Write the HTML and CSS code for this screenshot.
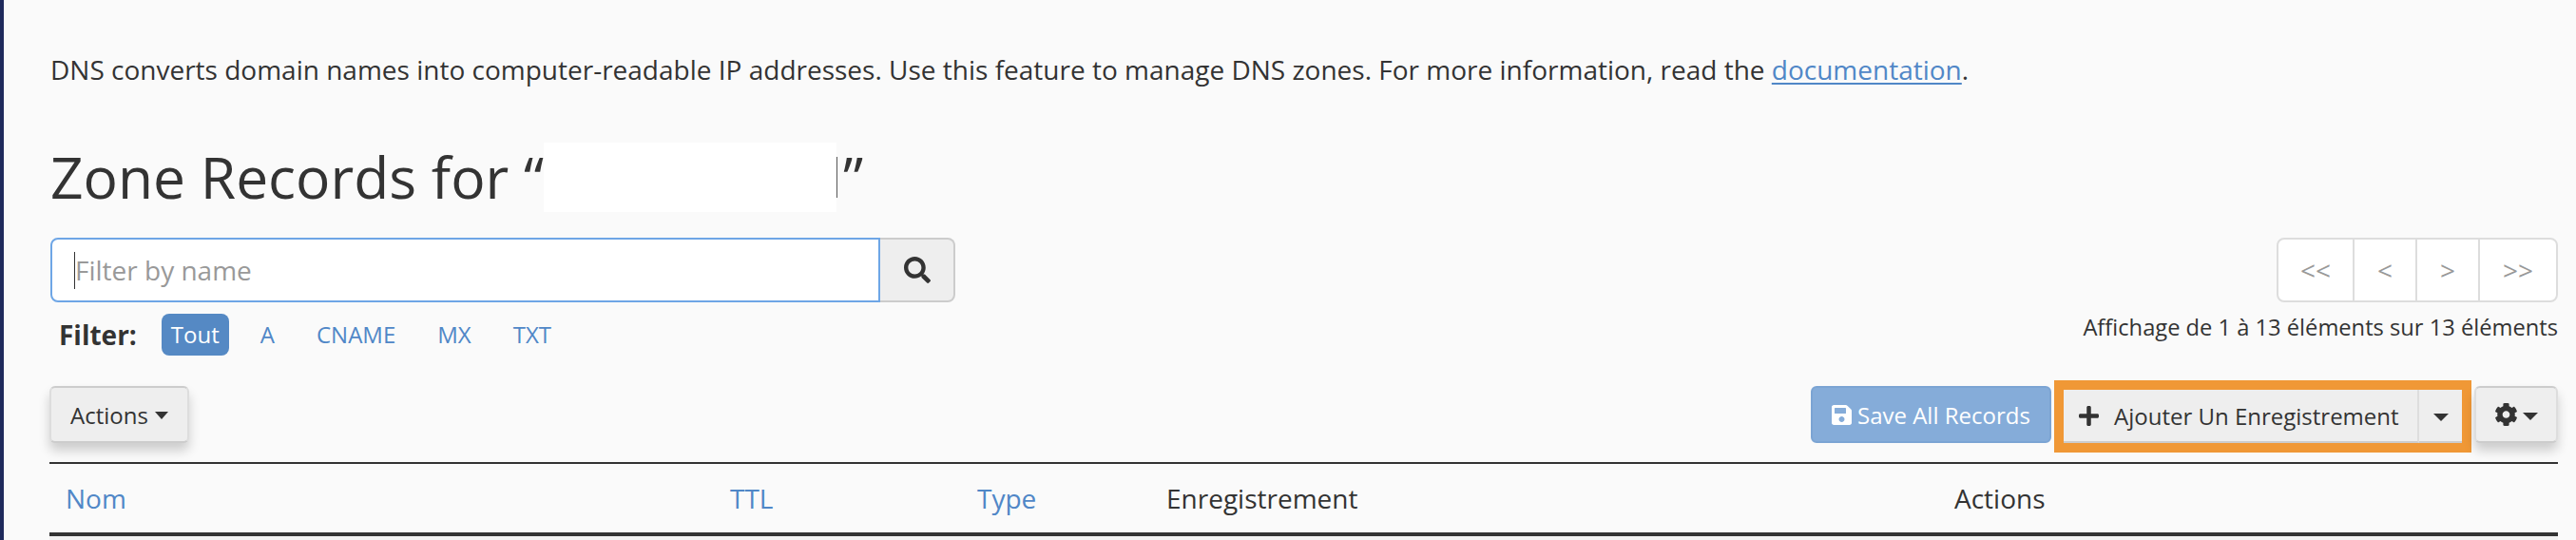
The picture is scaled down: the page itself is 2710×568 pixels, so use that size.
FILE: index.html
```html
<!DOCTYPE html>
<html lang="fr">
<head>
<meta charset="utf-8">
<title>Zone Records</title>
<link rel="stylesheet" href="styles.css">
</head>
<body>
<main class="page">
  <p class="intro">DNS converts domain names into computer-readable IP addresses. Use this feature to manage DNS zones. For more information, read the <a href="#">documentation</a>.</p>
  <h1 class="title">Zone Records for “<span class="redact"></span>”</h1>
  <div class="filters">
    <div class="filter-left">
      <div class="search">
        <div class="search-input"><span class="caret-line"></span><span class="placeholder">Filter by name</span></div>
        <button class="search-btn" type="button"><svg class="i-search" viewBox="0 0 512 512"><path fill="currentColor" d="M505 442.700L405.300 343c-4.500-4.500-10.600-7-17-7H372c27.600-35.300 44-79.700 44-128C416 93.100 322.900 0 208 0S0 93.100 0 208s93.100 208 208 208c48.300 0 92.700-16.400 128-44v16.300c0 6.400 2.500 12.500 7 17l99.700 99.700c9.400 9.400 24.600 9.400 33.900 0l28.300-28.300c9.400-9.400 9.400-24.600.1-34zM208 336c-70.700 0-128-57.200-128-128 0-70.700 57.200-128 128-128 70.700 0 128 57.200 128 128 0 70.700-57.200 128-128 128z"/></svg></button>
      </div>
      <div class="chips">
        <strong class="chips-label">Filter:</strong>
        <a class="chip active" href="#">Tout</a>
        <a class="chip" href="#">A</a>
        <a class="chip" href="#">CNAME</a>
        <a class="chip" href="#">MX</a>
        <a class="chip" href="#">TXT</a>
      </div>
    </div>
    <div class="filter-right">
      <div class="pager">
        <span class="pg pg-wide">&lt;&lt;</span><span class="pg">&lt;</span><span class="pg">&gt;</span><span class="pg pg-last">&gt;&gt;</span>
      </div>
      <div class="count">Affichage de 1 à 13 éléments sur 13 éléments</div>
    </div>
  </div>
  <div class="toolbar">
    <button class="btn btn-actions btn-shadow" type="button">Actions<span class="tri"></span></button>
    <div class="toolbar-right">
      <button class="btn btn-save" type="button"><svg class="i-save" viewBox="0 32 448 448"><path fill="currentColor" d="M433.941 129.941l-83.882-83.882A48 48 0 0 0 316.118 32H48C21.490 32 0 53.490 0 80v352c0 26.510 21.490 48 48 48h352c26.510 0 48-21.490 48-48V163.882a48 48 0 0 0-14.059-33.941zM224 416c-35.346 0-64-28.654-64-64 0-35.346 28.654-64 64-64s64 28.654 64 64c0 35.346-28.654 64-64 64zm96-304.520V212c0 6.627-5.373 12-12 12H76c-6.627 0-12-5.373-12-12V108c0-6.627 5.373-12 12-12h228.520c3.183 0 6.235 1.264 8.485 3.515l3.480 3.480A11.996 11.996 0 0 1 320 111.480z"/></svg>Save All Records</button>
      <div class="highlight">
        <button class="btn-add" type="button"><svg class="i-plus" viewBox="0 32 448 448"><path fill="currentColor" d="M416 208H272V64c0-17.670-14.330-32-32-32h-32c-17.670 0-32 14.330-32 32v144H32c-17.670 0-32 14.330-32 32v32c0 17.670 14.330 32 32 32h144v144c0 17.670 14.330 32 32 32h32c17.670 0 32-14.330 32-32V304h144c17.670 0 32-14.330 32-32v-32c0-17.670-14.330-32-32-32z"/></svg>Ajouter Un Enregistrement</button>
        <button class="btn-add-caret" type="button"><span class="tri"></span></button>
      </div>
      <button class="btn btn-gear btn-shadow" type="button"><svg class="i-gear" viewBox="17 7 478 498"><path fill="currentColor" d="M487.400 315.700l-42.600-24.600c4.300-23.200 4.300-47 0-70.200l42.600-24.600c4.900-2.800 7.100-8.600 5.500-14-11.100-35.600-30-67.800-54.700-94.600-3.800-4.100-10-5.100-14.800-2.300L380.800 110c-17.900-15.400-38.500-27.300-60.800-35.100V25.800c0-5.600-3.900-10.500-9.400-11.700-36.700-8.200-74.300-7.800-109.200 0-5.500 1.200-9.400 6.100-9.400 11.700V75c-22.200 7.900-42.800 19.800-60.800 35.100L88.700 85.500c-4.900-2.800-11-1.900-14.800 2.300-24.700 26.700-43.600 58.900-54.700 94.600-1.700 5.400.6 11.200 5.500 14L67.300 221c-4.300 23.200-4.300 47 0 70.200l-42.600 24.600c-4.900 2.800-7.100 8.600-5.500 14 11.100 35.600 30 67.800 54.700 94.600 3.800 4.100 10 5.100 14.800 2.300l42.600-24.600c17.900 15.400 38.500 27.300 60.800 35.100v49.200c0 5.600 3.900 10.500 9.400 11.700 36.700 8.200 74.300 7.800 109.200 0 5.500-1.200 9.400-6.100 9.400-11.700v-49.200c22.200-7.900 42.800-19.800 60.800-35.100l42.600 24.600c4.900 2.800 11 1.900 14.800-2.300 24.700-26.700 43.600-58.900 54.700-94.600 1.500-5.500-.7-11.300-5.600-14.100zM256 336c-44.100 0-80-35.900-80-80s35.900-80 80-80 80 35.900 80 80-35.900 80-80 80z"/></svg><span class="tri"></span></button>
    </div>
  </div>
  <table class="records">
    <thead>
      <tr>
        <th class="c-name"><a href="#">Nom</a></th>
        <th class="c-ttl"><a href="#">TTL</a></th>
        <th class="c-type"><a href="#">Type</a></th>
        <th class="c-rec">Enregistrement</th>
        <th class="c-act">Actions</th>
      </tr>
    </thead>
  </table>
  <div class="below"></div>
</main>
</body>
</html>
```
FILE: styles.css
```css
* { box-sizing: border-box; }
html, body { margin: 0; padding: 0; height: 100%; }
body {
  background: #fafafa;
  color: #333;
  font-family: "Open Sans", "Liberation Sans", sans-serif;
  font-size: 28px;
  overflow: hidden;
}
a { color: #5087c7; text-decoration: none; }
button { font-family: inherit; margin: 0; }

.page {
  height: 568px;
  border-left: 4px solid #1f2a5c;
  padding: 0 19px 0 48px;
}
.intro {
  margin: 0;
  padding: 55px 0 0 1px;
  line-height: 36px;
  font-size: 28px;
}
.intro a { text-decoration: underline; text-underline-offset: 3px; }

.title {
  margin: 0;
  padding: 29px 0 0 1px;
  height: 159px;
  display: flex;
  align-items: center;
  font-size: 60.5px;
  font-weight: 500;
  line-height: 73px;
  color: #333;
}
.redact {
  position: relative;
  display: block;
  width: 308px;
  height: 73px;
  margin: 3px 7px 0 0;
  background: #fff;
}
.redact::after {
  content: "";
  position: absolute;
  right: -1px;
  top: 15px;
  height: 43px;
  width: 1px;
  background: #555;
}

.filters { display: flex; justify-content: space-between; align-items: flex-start; padding-left: 1px; }
.filter-left { display: flex; flex-direction: column; }
.search { display: flex; width: 952px; height: 68px; }
.search-input {
  flex: 1;
  display: flex;
  align-items: center;
  background: #fff;
  border: 2px solid #6ea6e6;
  border-radius: 8px 0 0 8px;
  padding-left: 23px;
  font-size: 28px;
  color: #999;
}
.caret-line { width: 1px; height: 39px; background: #333; }
.search-btn {
  width: 79px;
  background: #eee;
  border: 2px solid #ccc;
  border-left: 0;
  border-radius: 0 8px 8px 0;
  color: #333;
  padding: 0;
  display: flex;
  align-items: center;
  justify-content: center;
}
.i-search { width: 28px; height: 28px; }

.chips { display: flex; align-items: center; margin-top: 12px; height: 44px; padding-left: 9px; }
.chips-label { font-size: 28px; font-weight: 700; margin-right: 26px; }
.chip { font-size: 24px; padding: 0 10px; line-height: 44px; margin-right: 24px; border-radius: 8px; }
.chip.active { background: #5589c4; color: #fff; margin-right: 23px; }

.filter-right { display: flex; flex-direction: column; align-items: flex-end; }
.pager {
  display: flex;
  width: 296px;
  height: 68px;
  background: #fff;
  border: 2px solid #ddd;
  border-radius: 8px;
  color: #999;
  font-size: 28px;
}
.pg {
  flex: 0 0 66px;
  display: flex;
  align-items: center;
  justify-content: center;
  border-right: 2px solid #ddd;
}
.pg-wide { flex-basis: 80px; }
.pg-last { flex: 1; border-right: 0; }
.count { font-size: 23.7px; line-height: 34px; margin-top: 9px; }

.toolbar { display: flex; justify-content: space-between; align-items: flex-start; margin-top: 32px; height: 80px; }
.toolbar-right { display: flex; align-items: flex-start; }
.btn {
  height: 60px;
  border-radius: 6px;
  border: 2px solid #ddd;
  border-top-color: #ccc;
  border-bottom-color: #ccc;
  background: #eee;
  color: #333;
  font-size: 24px;
  padding: 0 20px;
  display: flex;
  align-items: center;
}
.btn-shadow { box-shadow: 0 8px 12px rgba(0, 0, 0, .18); }
.tri {
  display: inline-block;
  width: 0;
  height: 0;
  border-top: 8px solid #333;
  border-left: 8px solid transparent;
  border-right: 8px solid transparent;
}
.btn-actions { width: 147px; }
.btn-actions .tri { margin: 2px 0 0 7px; border-left-width: 7px; border-right-width: 7px; }
.btn-save {
  width: 253px;
  padding: 0 0 0 20px;
  background: #85acd9;
  border: 2px solid #7ba4d3;
  color: #fff;
  margin-right: 3px;
}
.i-save { width: 21px; height: 21px; margin-right: 6px; }
.highlight {
  display: flex;
  width: 439px;
  height: 76px;
  margin-top: -6px;
  border: 10px solid #f09836;
  background: #eee;
}
.btn-add {
  flex: 0 0 374px;
  height: 56px;
  background: #eee;
  color: #333;
  border: 0;
  border-bottom: 2px solid #ccc;
  border-right: 2px solid #ddd;
  font-size: 24px;
  padding: 0 0 0 16px;
  display: flex;
  align-items: center;
}
.i-plus { width: 21px; height: 21px; margin-right: 16px; }
.btn-add-caret {
  flex: 1;
  height: 56px;
  background: #eee;
  border: 0;
  border-bottom: 2px solid #ccc;
  padding: 0;
  display: flex;
  align-items: center;
  justify-content: center;
}
.btn-add-caret .tri { margin: 4px 0 0; }
.btn-gear { width: 88px; margin-left: 3px; padding: 0 0 0 20px; }
.i-gear { width: 23px; height: 24px; }
.btn-gear .tri { margin: 4px 0 0 6px; }

.records {
  width: 2639px;
  border-collapse: separate;
  border-spacing: 0;
  table-layout: fixed;
}
.records th {
  height: 78px;
  padding: 0 17px;
  text-align: left;
  font-weight: 400;
  font-size: 28px;
  border-top: 2px solid #333;
  border-bottom: 4px solid #333;
}
.c-name { width: 699px; }
.c-ttl { width: 260px; }
.c-type { width: 199px; }
.c-rec { width: 829px; }
.below { height: 4px; background: #f2f2f2; }
```
